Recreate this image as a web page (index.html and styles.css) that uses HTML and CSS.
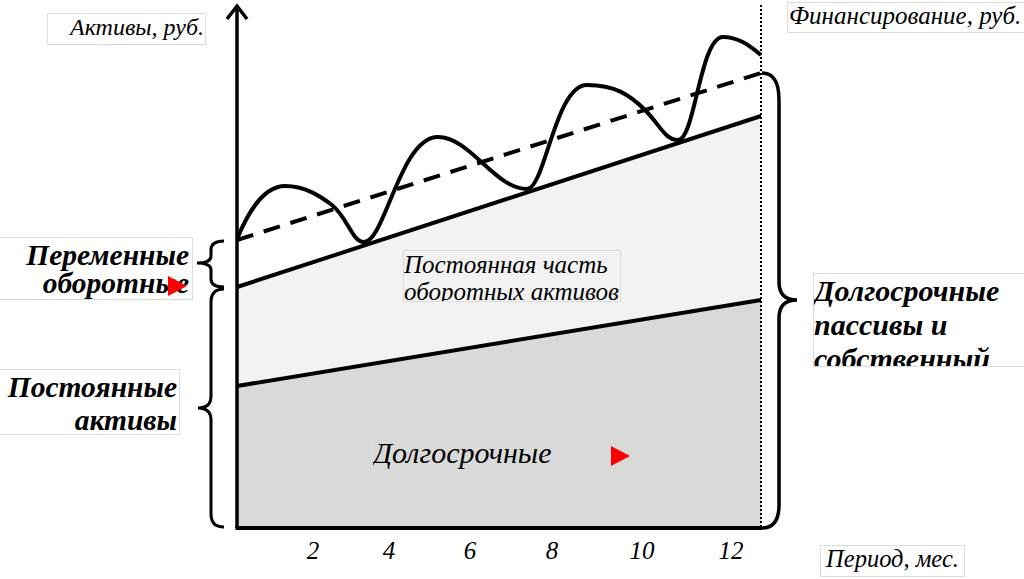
FILE: index.html
```html
<!DOCTYPE html>
<html lang="ru">
<head>
<meta charset="utf-8">
<title>Финансирование активов</title>
<link rel="stylesheet" href="styles.css">
</head>
<body>
<div class="canvas">
  <svg class="chart" width="1024" height="579" viewBox="0 0 1024 579" xmlns="http://www.w3.org/2000/svg">
    <polygon points="237,287 761,116 761,528 237,528" fill="#f2f2f2"/>
    <polygon points="237,386 761,300 761,528 237,528" fill="#d9d9d9"/>
    <line x1="761" y1="5" x2="761" y2="528" stroke="#000" stroke-width="2" stroke-dasharray="2 2"/>
    <line x1="237" y1="287" x2="761" y2="116" stroke="#000" stroke-width="4"/>
    <line x1="237" y1="386" x2="761" y2="300" stroke="#000" stroke-width="4"/>
    <line x1="237" y1="240" x2="761" y2="73" stroke="#000" stroke-width="4" stroke-dasharray="17 11"/>
    <path d="M237,239 C250,208 265,186 285,186 C305,186 320,196 332,205 C348,218 352,242 364,242 C385,242 400,137 438,137 C470,137 495,189 527,189 C545,189 555,85 587,85 C615,85 630,95 645,110 C660,125 665,140 678,140 C695,140 700,37 723,37 C740,37 752,48 761,55" fill="none" stroke="#000" stroke-width="4"/>
    <line x1="237" y1="9" x2="237" y2="528" stroke="#000" stroke-width="3.5"/>
    <polyline points="227,19 237,6 247,19" fill="none" stroke="#000" stroke-width="3.5"/>
    <line x1="235.5" y1="528" x2="762" y2="528" stroke="#000" stroke-width="4"/>
    <path d="M224,241 Q211,241 211,250 L211,256 Q211,263 197,263 Q211,263 211,270 L211,279 Q211,287 224,287" fill="none" stroke="#000" stroke-width="3"/>
    <path d="M224,289 Q211,289 211,302 L211,396 Q211,408 198,408 Q211,408 211,420 L211,514 Q211,527 224,527" fill="none" stroke="#000" stroke-width="3"/>
    <path d="M762,73 Q779,73 779,100 L779,282 Q779,300 797,300 Q779,300 779,318 L779,505 Q779,528 762,528" fill="none" stroke="#000" stroke-width="3.5"/>
    <g class="ticks">
      <text x="313" y="559" text-anchor="middle">2</text>
      <text x="389" y="559" text-anchor="middle">4</text>
      <text x="470" y="559" text-anchor="middle">6</text>
      <text x="552" y="559" text-anchor="middle">8</text>
      <text x="642" y="559" text-anchor="middle">10</text>
      <text x="731" y="559" text-anchor="middle">12</text>
    </g>
  </svg>

  <div class="label label-assets">Активы, руб.</div>
  <div class="label label-finance">Финансирование, руб.</div>
  <div class="label label-variable">Переменные<br>оборотные<span class="marker marker-variable"></span></div>
  <div class="label label-permanent">Постоянные<br>активы</div>
  <div class="label label-part">Постоянная часть<br>оборотных активов</div>
  <div class="label label-long">Долгосрочные<span class="marker marker-long"></span></div>
  <div class="label label-liab">Долгосрочные<br>пассивы и<br>собственный<br>капитал</div>
  <div class="label label-period">Период, мес.</div>
</div>
</body>
</html>
```
FILE: styles.css
```css
html, body {
  margin: 0;
  padding: 0;
  background: #fff;
}
.canvas {
  position: relative;
  width: 1024px;
  height: 579px;
  overflow: hidden;
  font-family: "Liberation Serif", "Times New Roman", serif;
  font-style: italic;
  color: #000;
}
.chart {
  display: block;
}
.ticks text {
  font-family: "Liberation Serif", "Times New Roman", serif;
  font-style: italic;
  font-size: 25px;
  fill: #000;
}
.label {
  position: absolute;
  box-sizing: border-box;
  border: 1px solid #dcdcdc;
  overflow: hidden;
  white-space: nowrap;
}
.label-assets {
  left: 47px;
  top: 13px;
  width: 159px;
  height: 32px;
  font-size: 24px;
  line-height: 24px;
  padding: 1px 1px 0 0;
  text-align: right;
}
.label-finance {
  left: 787px;
  top: 2px;
  width: 245px;
  height: 31px;
  font-size: 25px;
  line-height: 25px;
  padding: 0 0 0 1px;
}
.label-variable {
  left: -1px;
  top: 237px;
  width: 194px;
  height: 63px;
  font-size: 29.5px;
  font-weight: bold;
  line-height: 28px;
  padding: 3px 3px 0 0;
  text-align: right;
}
.label-permanent {
  left: -1px;
  top: 369px;
  width: 181px;
  height: 66px;
  font-size: 29.5px;
  font-weight: bold;
  line-height: 33px;
  padding: 1px 2px 0 0;
  text-align: right;
}
.label-part {
  left: 403px;
  top: 250px;
  width: 218px;
  height: 52px;
  font-size: 25px;
  line-height: 27px;
  padding: 0;
}
.label-long {
  left: 372px;
  top: 437px;
  width: 263px;
  height: 37px;
  font-size: 30px;
  line-height: 30px;
  padding: 0;
}
.label-liab {
  left: 813px;
  top: 273px;
  width: 220px;
  height: 94px;
  font-size: 30px;
  font-weight: bold;
  line-height: 34px;
  padding: 0;
}
.label-period {
  left: 820px;
  top: 545px;
  width: 145px;
  height: 32px;
  font-size: 24.5px;
  line-height: 24px;
  padding: 1px 0 0 0;
  text-align: center;
}
.marker {
  position: absolute;
  width: 0;
  height: 0;
  border-top: 10px solid transparent;
  border-bottom: 10px solid transparent;
  border-left: 19px solid #ff0000;
}
.marker-variable {
  left: 168px;
  top: 38px;
}
.marker-long {
  left: 238px;
  top: 8px;
}
```
